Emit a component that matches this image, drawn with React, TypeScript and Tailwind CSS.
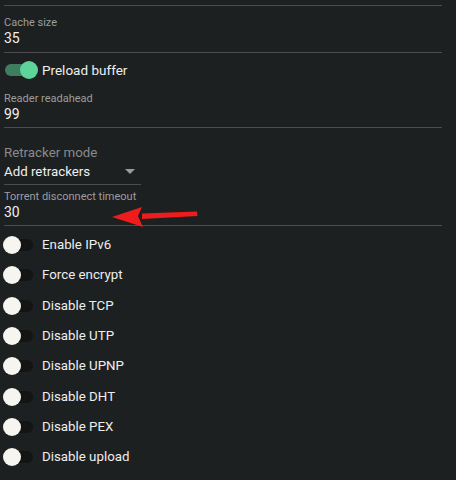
import React from "react";

const toggles = [
  "Enable IPv6",
  "Force encrypt",
  "Disable TCP",
  "Disable UTP",
  "Disable UPNP",
  "Disable DHT",
  "Disable PEX",
  "Disable upload",
];

function Switch({ on }: { on?: boolean }) {
  return (
    <div className="relative h-[20px] w-[34px] shrink-0">
      <div
        className={`absolute left-[1px] top-[4px] h-[12px] w-[28px] rounded-full ${
          on ? "bg-[#3f7d61]" : "bg-[#131515]"
        }`}
      />
      <div
        className={`absolute top-[1px] h-[18px] w-[18px] rounded-full ${
          on ? "left-[16px] bg-[#5cd49a]" : "left-[-1px] bg-[#f6f5f0]"
        }`}
      />
    </div>
  );
}

function Field({ label, value, top }: { label: string; value: string; top: string }) {
  return (
    <div className={`flex flex-col border-b border-[#4a4c4d] pb-[4px] ${top}`}>
      <span className="text-[11px] leading-[14px] text-[#9c9d9e]">{label}</span>
      <span className="text-[14px] leading-[17px] text-[#f0f0f0]">{value}</span>
    </div>
  );
}

export default function App() {
  return (
    <div
      className="relative h-[480px] w-[456px] overflow-hidden bg-[#1d2021]"
      style={{ fontFamily: "Roboto, 'Liberation Sans', sans-serif" }}
    >
      <div className="flex w-[442px] flex-col pl-[4px]">
        <div className="h-[6px] border-b border-[#4a4c4d]" />
        <Field label="Cache size" value="35" top="pt-[10px] pb-[5px]" />
        <div className="flex h-[34px] items-center gap-[4px]">
          <Switch on />
          <span className="text-[13.5px] text-[#eeeeee]">Preload buffer</span>
        </div>
        <Field label="Reader readahead" value="99" top="pt-[5px]" />
        <div className="flex w-[137px] flex-col border-b border-[#4a4c4d] pb-[4px] pt-[16px]">
          <span className="text-[13.3px] leading-[17px] text-[#8a8b8c]">Retracker mode</span>
          <div className="mt-[2px] flex items-center justify-between pr-[6px]">
            <span className="text-[13.3px] leading-[17px] text-[#f0f0f0]">Add retrackers</span>
            <svg width="10" height="5" viewBox="0 0 10 5">
              <path d="M0 0h10L5 5z" fill="#9a9b9c" />
            </svg>
          </div>
        </div>
        <Field label="Torrent disconnect timeout" value="30" top="pt-[5px]" />
        <div className="flex flex-col pt-[4px]">
          {toggles.map((t) => (
            <div key={t} className="flex h-[30.3px] items-center gap-[4px]">
              <Switch />
              <span className="text-[13.3px] text-[#eeeeee]">{t}</span>
            </div>
          ))}
        </div>
      </div>
      {/* red annotation arrow */}
      <svg
        className="absolute left-[108px] top-[203px]"
        width="95"
        height="28"
        viewBox="0 0 95 28"
      >
        <path d="M34 10.5 L89 8.5 L89.5 13 L34 16 Z" fill="#ee1c1c" />
        <path d="M4 14 L34 4 L30 13 L35 24 Z" fill="#ee1c1c" />
      </svg>
    </div>
  );
}
